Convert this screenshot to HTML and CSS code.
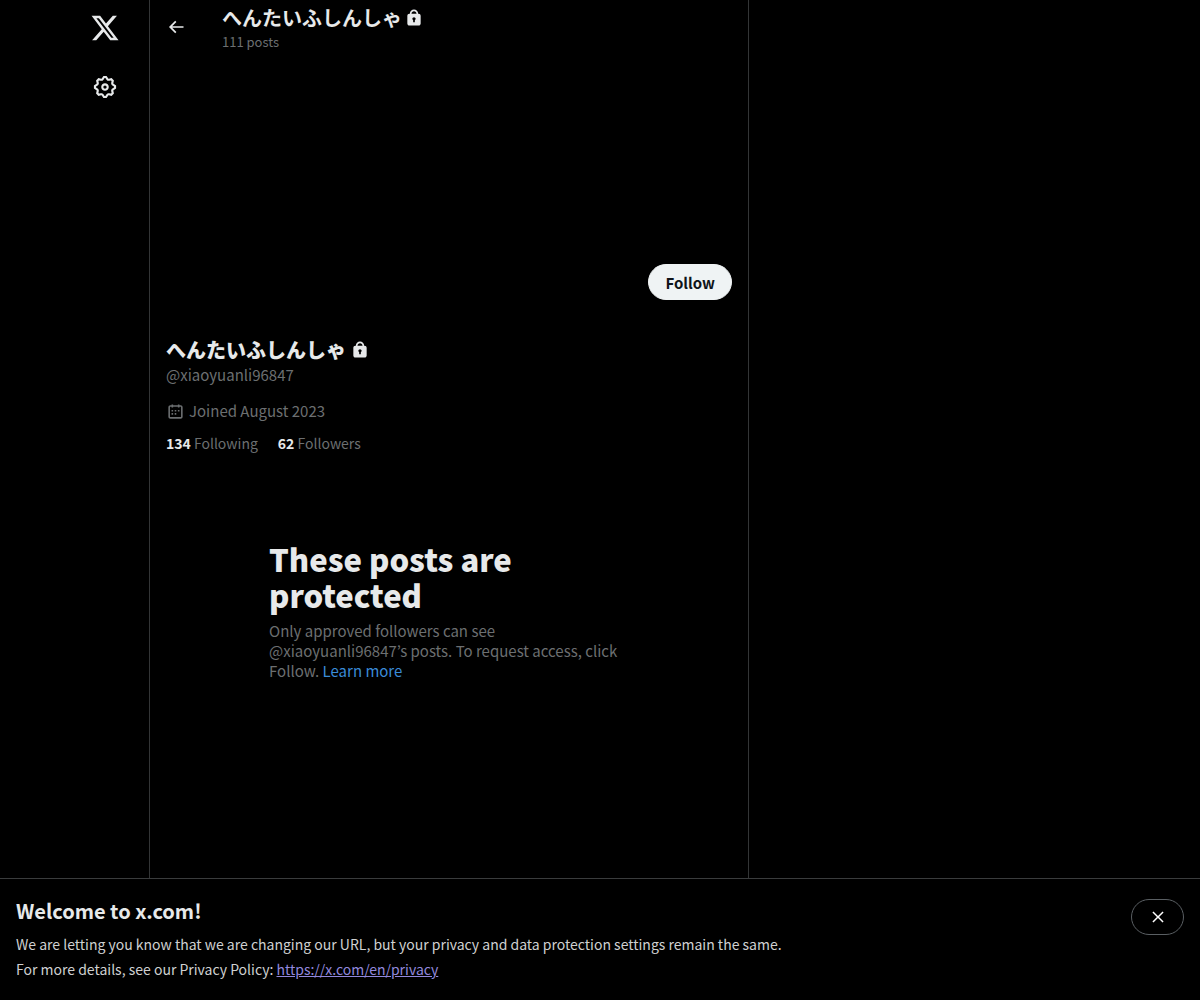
FILE: index.html
```html
<!DOCTYPE html>
<html lang="en">
<head>
  <meta charset="UTF-8" />
  <meta name="viewport" content="width=device-width, initial-scale=1.0"/>
  <title>へんたいふしんしゃ (@xiaoyuanli96847) / X</title>
  <link rel="stylesheet" href="styles.css">
</head>
<body>

  <div class="layout">
    <!-- Left navigation -->
    <header class="sidebar">
      <nav class="nav">
        <a class="nav-link" href="#" aria-label="X">
          <svg class="logo" viewBox="0 0 24 24"><path d="M18.244 2.25h3.308l-7.227 8.26 8.502 11.24H16.17l-5.214-6.817L4.99 21.75H1.68l7.73-8.835L1.254 2.25H8.08l4.713 6.231zm-1.161 17.52h1.833L7.084 4.126H5.117z"/></svg>
        </a>
        <a class="nav-link" href="#" aria-label="Settings">
          <svg class="gear" viewBox="0 0 24 24"><path d="M10.54 1.75h2.92l1.57 2.36c.11.17.32.25.53.21l2.53-.59 2.17 2.17-.58 2.54c-.05.2.04.41.21.53l2.36 1.57v2.92l-2.36 1.57c-.17.12-.26.33-.21.53l.58 2.54-2.17 2.17-2.53-.59c-.21-.04-.42.04-.53.21l-1.57 2.36h-2.92l-1.58-2.36c-.11-.17-.32-.25-.52-.21l-2.54.59-2.17-2.17.58-2.54c.05-.2-.03-.41-.21-.53l-2.35-1.57v-2.92L4.1 8.97c.18-.12.26-.33.21-.53L3.73 5.9 5.9 3.73l2.54.59c.2.04.41-.04.52-.21l1.58-2.36zm1.07 2l-.98 1.47C10.05 6.08 9 6.5 7.99 6.27l-1.46-.34-.6.6.33 1.46c.24 1.01-.18 2.07-1.05 2.64l-1.46.98v.78l1.46.98c.87.57 1.29 1.63 1.05 2.64l-.33 1.46.6.6 1.46-.34c1.01-.23 2.06.19 2.64 1.05l.98 1.47h.78l.97-1.47c.58-.86 1.63-1.28 2.65-1.05l1.45.34.61-.6-.34-1.46c-.23-1.01.18-2.07 1.05-2.64l1.47-.98v-.78l-1.47-.98c-.87-.57-1.28-1.63-1.05-2.64l.34-1.46-.61-.6-1.45.34c-1.02.23-2.07-.19-2.65-1.05l-.97-1.47h-.78zM12 10.5c-.83 0-1.5.67-1.5 1.5s.67 1.5 1.5 1.5c.83 0 1.5-.67 1.5-1.5s-.67-1.5-1.5-1.5zM8.5 12c0-1.93 1.56-3.5 3.5-3.5 1.93 0 3.5 1.57 3.5 3.5s-1.57 3.5-3.5 3.5c-1.94 0-3.5-1.57-3.5-3.5z"/></svg>
        </a>
      </nav>
    </header>

    <!-- Profile -->
    <main class="main">
      <div class="topbar">
        <button class="back-btn" aria-label="Back">
          <svg class="icon" viewBox="0 0 24 24"><path d="M7.414 13l5.043 5.04-1.414 1.42L3.586 12l7.457-7.46 1.414 1.42L7.414 11H21v2H7.414z"/></svg>
        </button>
        <div class="topbar-text">
          <h2 class="topbar-name">へんたいふしんしゃ
            <svg class="icon" viewBox="0 0 24 24"><path d="M17.5 7H17v-.25c0-2.76-2.24-5-5-5s-5 2.24-5 5V7h-.5C5.12 7 4 8.12 4 9.5v9C4 19.88 5.12 21 6.5 21h11c1.39 0 2.5-1.12 2.5-2.5v-9C20 8.12 18.89 7 17.5 7zM13 14.73V17h-2v-2.27c-.59-.34-1-.99-1-1.73 0-1.1.9-2 2-2 1.11 0 2 .9 2 2 0 .74-.4 1.39-1 1.73zM15 7H9v-.25c0-1.66 1.35-3 3-3 1.66 0 3 1.34 3 3V7z"/></svg>
          </h2>
          <div class="post-count">111 posts</div>
        </div>
      </div>

      <div class="banner"></div>

      <section class="profile">
        <div class="actions">
          <button class="follow-btn">Follow</button>
        </div>
        <h1 class="name">へんたいふしんしゃ
          <svg class="icon" viewBox="0 0 24 24"><path d="M17.5 7H17v-.25c0-2.76-2.24-5-5-5s-5 2.24-5 5V7h-.5C5.12 7 4 8.12 4 9.5v9C4 19.88 5.12 21 6.5 21h11c1.39 0 2.5-1.12 2.5-2.5v-9C20 8.12 18.89 7 17.5 7zM13 14.73V17h-2v-2.27c-.59-.34-1-.99-1-1.73 0-1.1.9-2 2-2 1.11 0 2 .9 2 2 0 .74-.4 1.39-1 1.73zM15 7H9v-.25c0-1.66 1.35-3 3-3 1.66 0 3 1.34 3 3V7z"/></svg>
        </h1>
        <div class="handle">@xiaoyuanli96847</div>
        <div class="joined">
          <svg class="calendar" viewBox="0 0 24 24"><path d="M7 4V3h2v1h6V3h2v1h1.5C19.89 4 21 5.12 21 6.5v12c0 1.38-1.11 2.5-2.5 2.5h-13C4.12 21 3 19.88 3 18.5v-12C3 5.12 4.12 4 5.5 4H7zm0 2H5.5c-.27 0-.5.22-.5.5v12c0 .28.23.5.5.5h13c.28 0 .5-.22.5-.5v-12c0-.28-.22-.5-.5-.5H17v1h-2V6H9v1H7V6zm0 6h2v-2H7v2zm0 4h2v-2H7v2zm4-4h2v-2h-2v2zm0 4h2v-2h-2v2zm4-4h2v-2h-2v2z"/></svg>
          <span>Joined August 2023</span>
        </div>
        <div class="stats">
          <span><strong>134</strong> Following</span>
          <span><strong>62</strong> Followers</span>
        </div>
      </section>

      <section class="protected">
        <h2 class="protected-title">These posts are protected</h2>
        <p class="protected-text">Only approved followers can see @xiaoyuanli96847’s posts. To request access, click Follow. <a href="#">Learn more</a></p>
      </section>
    </main>
  </div>

  <!-- URL change notice -->
  <aside class="notice">
    <div class="notice-text">
      <h2 class="notice-title">Welcome to x.com!</h2>
      <p>We are letting you know that we are changing our URL, but your privacy and data protection settings remain the same.</p>
      <p>For more details, see our Privacy Policy: <a href="https://x.com/en/privacy">https://x.com/en/privacy</a></p>
    </div>
    <button class="close-btn" aria-label="Close">
      <svg viewBox="0 0 24 24"><path d="M10.59 12L4.54 5.96l1.42-1.42L12 10.59l6.04-6.05 1.42 1.42L13.41 12l6.05 6.04-1.42 1.42L12 13.41l-6.04 6.05-1.42-1.42L10.59 12z"/></svg>
    </button>
  </aside>

</body>
</html>
```

FILE: styles.css
```css
* {
  box-sizing: border-box;
}

body {
  margin: 0;
  background: #000;
  color: #e7e9ea;
  font-family: 'Noto Sans CJK JP', sans-serif;
  font-size: 15px;
  line-height: 20px;
}

h1, h2, p {
  margin: 0;
}

button {
  font-family: inherit;
  cursor: pointer;
}

svg {
  display: block;
  fill: currentColor;
  flex-shrink: 0;
}

.layout {
  display: grid;
  grid-template-columns: minmax(80px, 149fr) minmax(0, 600px) minmax(0, 451fr);
  min-height: 100vh;
}

.sidebar {
  display: flex;
  justify-content: flex-end;
  padding: 2px 18px;
}

.nav {
  display: flex;
  flex-direction: column;
  gap: 7px;
}

.nav-link {
  display: flex;
  align-items: center;
  justify-content: center;
  width: 52px;
  height: 52px;
  color: #e7e9ea;
}

.logo {
  width: 30px;
  height: 30px;
}

.gear {
  width: 26px;
  height: 26px;
}

.icon {
  width: 20px;
  height: 20px;
}

.main {
  border-left: 1px solid #333536;
  border-right: 1px solid #333536;
  padding-bottom: 122px;
}

.topbar {
  display: flex;
  align-items: center;
  height: 53px;
  padding: 0 16px;
}

.back-btn {
  display: flex;
  width: 56px;
  padding: 0;
  border: none;
  background: none;
  color: #e7e9ea;
}

.topbar-name,
.name {
  display: flex;
  align-items: center;
  font-size: 20px;
  line-height: 24px;
}

.topbar-name {
  gap: 2px;
  font-weight: 700;
  line-height: 30px;
}

.post-count {
  color: #6c6f71;
  font-size: 13px;
  line-height: 18px;
}

.banner {
  height: 199px;
}

.profile {
  padding: 12px 16px;
}

.actions {
  display: flex;
  justify-content: flex-end;
  height: 74px;
}

.follow-btn {
  height: 36px;
  padding: 0 16px;
  border: 1px solid #eff3f4;
  border-radius: 999px;
  background: #eff3f4;
  color: #0f1419;
  font-size: 15px;
  font-weight: 700;
}

.name {
  gap: 4px;
  font-weight: 800;
}

.handle,
.joined,
.stats {
  color: #6c6f71;
}

.handle {
  margin: 3px 0 16px;
}

.joined {
  display: flex;
  align-items: center;
  gap: 4px;
  margin-bottom: 12px;
}

.calendar {
  width: 19px;
  height: 19px;
}

.stats {
  display: flex;
  gap: 20px;
  font-size: 14px;
}

.stats strong {
  color: #e7e9ea;
}

.protected {
  max-width: 400px;
  margin: 76px auto 32px;
  padding: 0 20px;
}

.protected-title {
  margin-bottom: 8px;
  font-size: 31px;
  font-weight: 800;
  line-height: 36px;
}

.protected-text {
  color: #6c6f71;
}

.protected-text a {
  color: #3a8bd8;
  text-decoration: none;
}

.notice {
  position: fixed;
  left: 0;
  right: 0;
  bottom: 0;
  display: flex;
  align-items: flex-start;
  justify-content: space-between;
  padding: 20px 16px 18px;
  border-top: 1px solid #3a3c3d;
  background: #000;
}

.notice-text {
  color: #cfd0d1;
  font-size: 14px;
  line-height: 25px;
}

.notice-title {
  margin-bottom: 9px;
  color: #e7e9ea;
  font-size: 20px;
  line-height: 24px;
}

.notice-text a {
  color: #9288dd;
}

.close-btn {
  display: flex;
  align-items: center;
  justify-content: center;
  width: 53px;
  height: 36px;
  padding: 0;
  border: 1px solid #5a5f63;
  border-radius: 999px;
  background: none;
  color: #fff;
}

.close-btn svg {
  width: 18px;
  height: 18px;
}
```
